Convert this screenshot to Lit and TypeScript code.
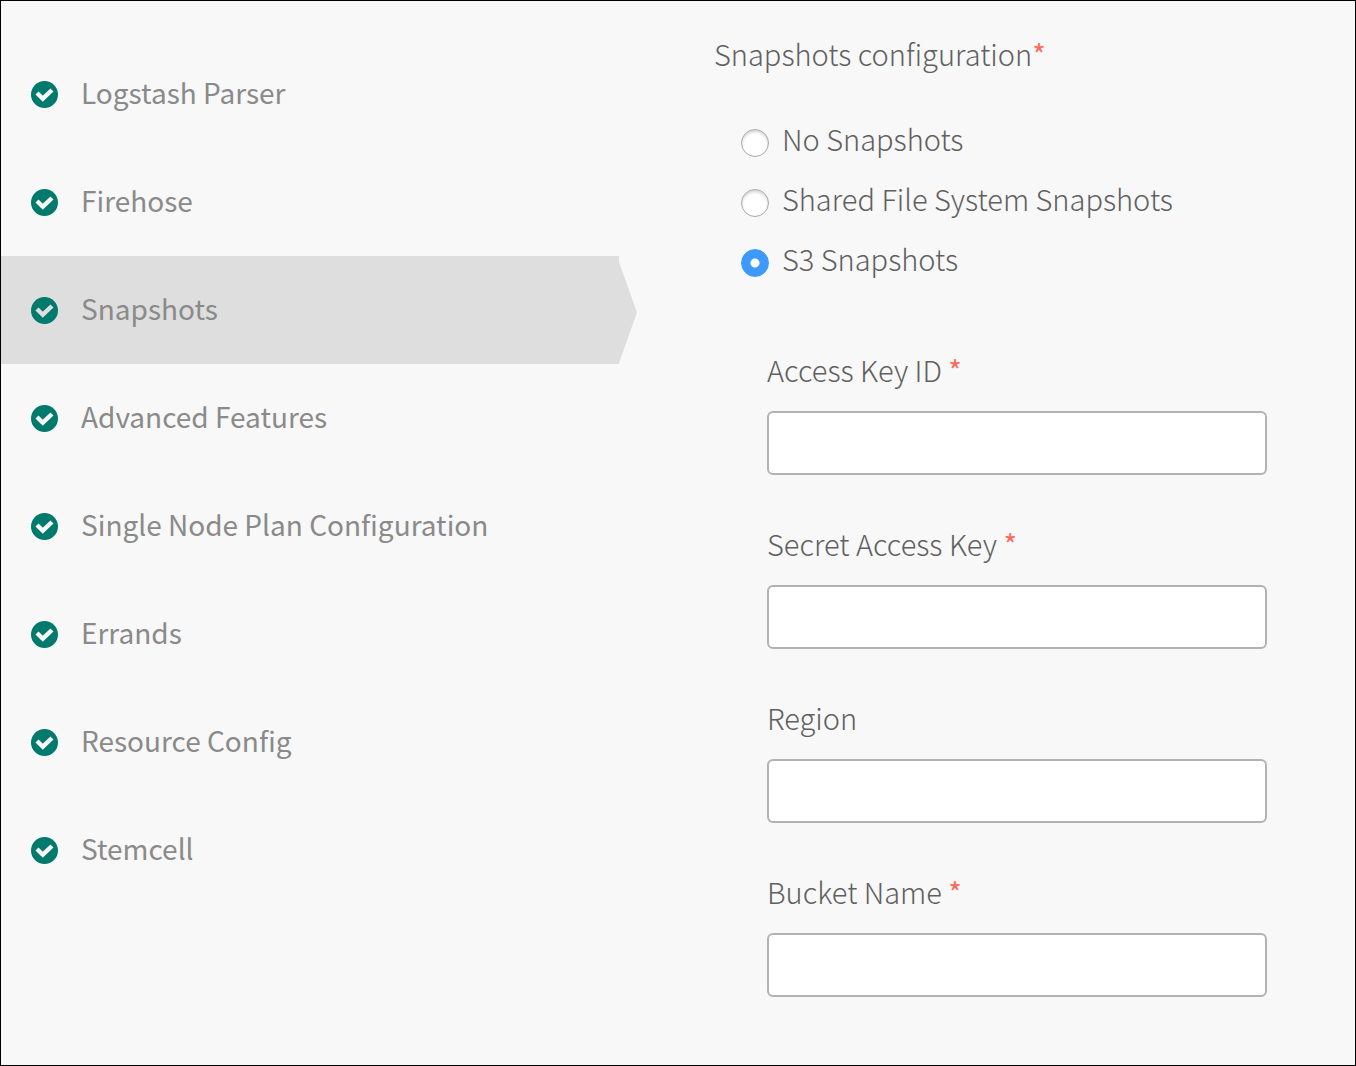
import { LitElement, html, css, nothing } from "lit";
import { customElement, property, state } from "lit/decorators.js";
import { classMap } from "lit/directives/class-map.js";

interface Field {
  id: string;
  label: string;
  required: boolean;
}

const STEPS = [
  "Logstash Parser",
  "Firehose",
  "Snapshots",
  "Advanced Features",
  "Single Node Plan Configuration",
  "Errands",
  "Resource Config",
  "Stemcell",
];

const OPTIONS = [
  { value: "none", label: "No Snapshots" },
  { value: "shared", label: "Shared File System Snapshots" },
  { value: "s3", label: "S3 Snapshots" },
];

const S3_FIELDS: Field[] = [
  { id: "access-key-id", label: "Access Key ID", required: true },
  { id: "secret-access-key", label: "Secret Access Key", required: true },
  { id: "region", label: "Region", required: false },
  { id: "bucket-name", label: "Bucket Name", required: true },
];

/** One labelled text box of the form. */
@customElement("form-field")
export class FormField extends LitElement {
  @property({ attribute: false }) field!: Field;

  static styles = css`
    :host {
      display: block;
    }
    .label {
      display: block;
      margin-bottom: 22px;
      line-height: 40px;
    }
    .required {
      color: #ff6a5c;
      font-weight: 400;
    }
    .input {
      display: block;
      box-sizing: border-box;
      width: 100%;
      height: 64px;
      padding: 0 16px;
      border: 2px solid #b2b2b2;
      border-radius: 6px;
      background: #fff;
      color: inherit;
      font: inherit;
    }
    .input:focus {
      outline: none;
      border-color: #3d99fc;
    }
  `;

  render() {
    const { id, label, required } = this.field;
    return html`
      <label class="label" for=${id}
        >${label}${required ? html` <span class="required">*</span>` : nothing}</label
      >
      <input class="input" id=${id} name=${id} type="text" ?required=${required} />
    `;
  }
}

@customElement("app-root")
export class AppRoot extends LitElement {
  @state() private step = "Snapshots";
  @state() private mode = "s3";

  static styles = css`
    :host {
      display: block;
      font-family: "Noto Sans CJK SC", "Open Sans", sans-serif;
      font-size: 29px;
      font-weight: 300;
      color: #606060;
    }
    .page {
      display: grid;
      grid-template-columns: minmax(0, 618fr) minmax(0, 736fr);
      box-sizing: border-box;
      min-height: 100vh;
      border: 1px solid #000;
      background: #f8f8f8;
    }
    .steps {
      margin: 0;
      padding: 39px 0 0;
      list-style: none;
    }
    .step {
      position: relative;
      display: flex;
      align-items: center;
      gap: 23px;
      min-height: 108px;
      padding: 0 30px;
      box-sizing: border-box;
      color: #8a8a8a;
      font-size: 28px;
      font-weight: 400;
      line-height: 36px;
      text-decoration: none;
    }
    .step.active {
      background: #dedede;
    }
    /* Pointer that juts out of the current step toward the form. */
    .step.active::after {
      content: "";
      position: absolute;
      left: 100%;
      top: 6px;
      bottom: 1px;
      width: 18px;
      background: #dedede;
      clip-path: polygon(0 0, 100% 50%, 0 100%);
    }
    .name {
      padding-bottom: 4px;
    }
    .check {
      flex: none;
      width: 27px;
      height: 27px;
    }
    .disc {
      fill: #007a6c;
    }
    .tick {
      fill: none;
      stroke: #f8f8f8;
      stroke-width: 4.4;
    }
    .active .tick {
      stroke: #dedede;
    }
    .form {
      padding: 32px 88px 67px 95px;
    }
    .group {
      margin: 0;
      padding: 0;
      border: 0;
      min-width: 0;
    }
    .title {
      padding: 0;
      margin-bottom: 35px;
      line-height: 40px;
    }
    .required {
      color: #ff6a5c;
      font-weight: 400;
    }
    .option {
      display: flex;
      align-items: center;
      gap: 13px;
      min-height: 60px;
      padding-left: 27px;
      line-height: 40px;
    }
    .radio {
      appearance: none;
      flex: none;
      width: 28px;
      height: 28px;
      margin: 10px 0 0;
      border: 1px solid #a9a9a9;
      border-radius: 50%;
      background: #fff;
      box-shadow: inset 0 2px 3px #d4d4d4;
    }
    .radio:checked {
      border-color: #3d99fc;
      background: radial-gradient(circle, #fff 0 4px, #3d99fc 5px);
      box-shadow: none;
    }
    .fields {
      display: grid;
      gap: 48px;
      max-width: 500px;
      margin-top: 61px;
      padding-left: 53px;
    }
  `;

  private renderStep(name: string) {
    const active = name === this.step;
    return html`
      <li>
        <a
          class=${classMap({ step: true, active })}
          href="#${name.toLowerCase().replaceAll(" ", "-")}"
          aria-current=${active ? "page" : nothing}
          @click=${() => (this.step = name)}
        >
          <svg class="check" viewBox="0 0 27 27" aria-hidden="true">
            <circle class="disc" cx="13.5" cy="13.5" r="13.5" />
            <path class="tick" d="M6 12 L11.8 17.7 L21 9" />
          </svg>
          <span class="name">${name}</span>
        </a>
      </li>
    `;
  }

  render() {
    return html`
      <div class="page">
        <nav aria-label="Settings">
          <ul class="steps">
            ${STEPS.map((name) => this.renderStep(name))}
          </ul>
        </nav>
        <form class="form" @submit=${(e: Event) => e.preventDefault()}>
          <fieldset class="group">
            <legend class="title">Snapshots configuration<span class="required">*</span></legend>
            ${OPTIONS.map(
              (o) => html`
                <label class="option">
                  <input
                    class="radio"
                    type="radio"
                    name="snapshots"
                    .value=${o.value}
                    ?checked=${o.value === this.mode}
                    @change=${() => (this.mode = o.value)}
                  />
                  <span>${o.label}</span>
                </label>
              `,
            )}
          </fieldset>
          ${this.mode === "s3"
            ? html`<div class="fields">
                ${S3_FIELDS.map((f) => html`<form-field .field=${f}></form-field>`)}
              </div>`
            : nothing}
        </form>
      </div>
    `;
  }
}
